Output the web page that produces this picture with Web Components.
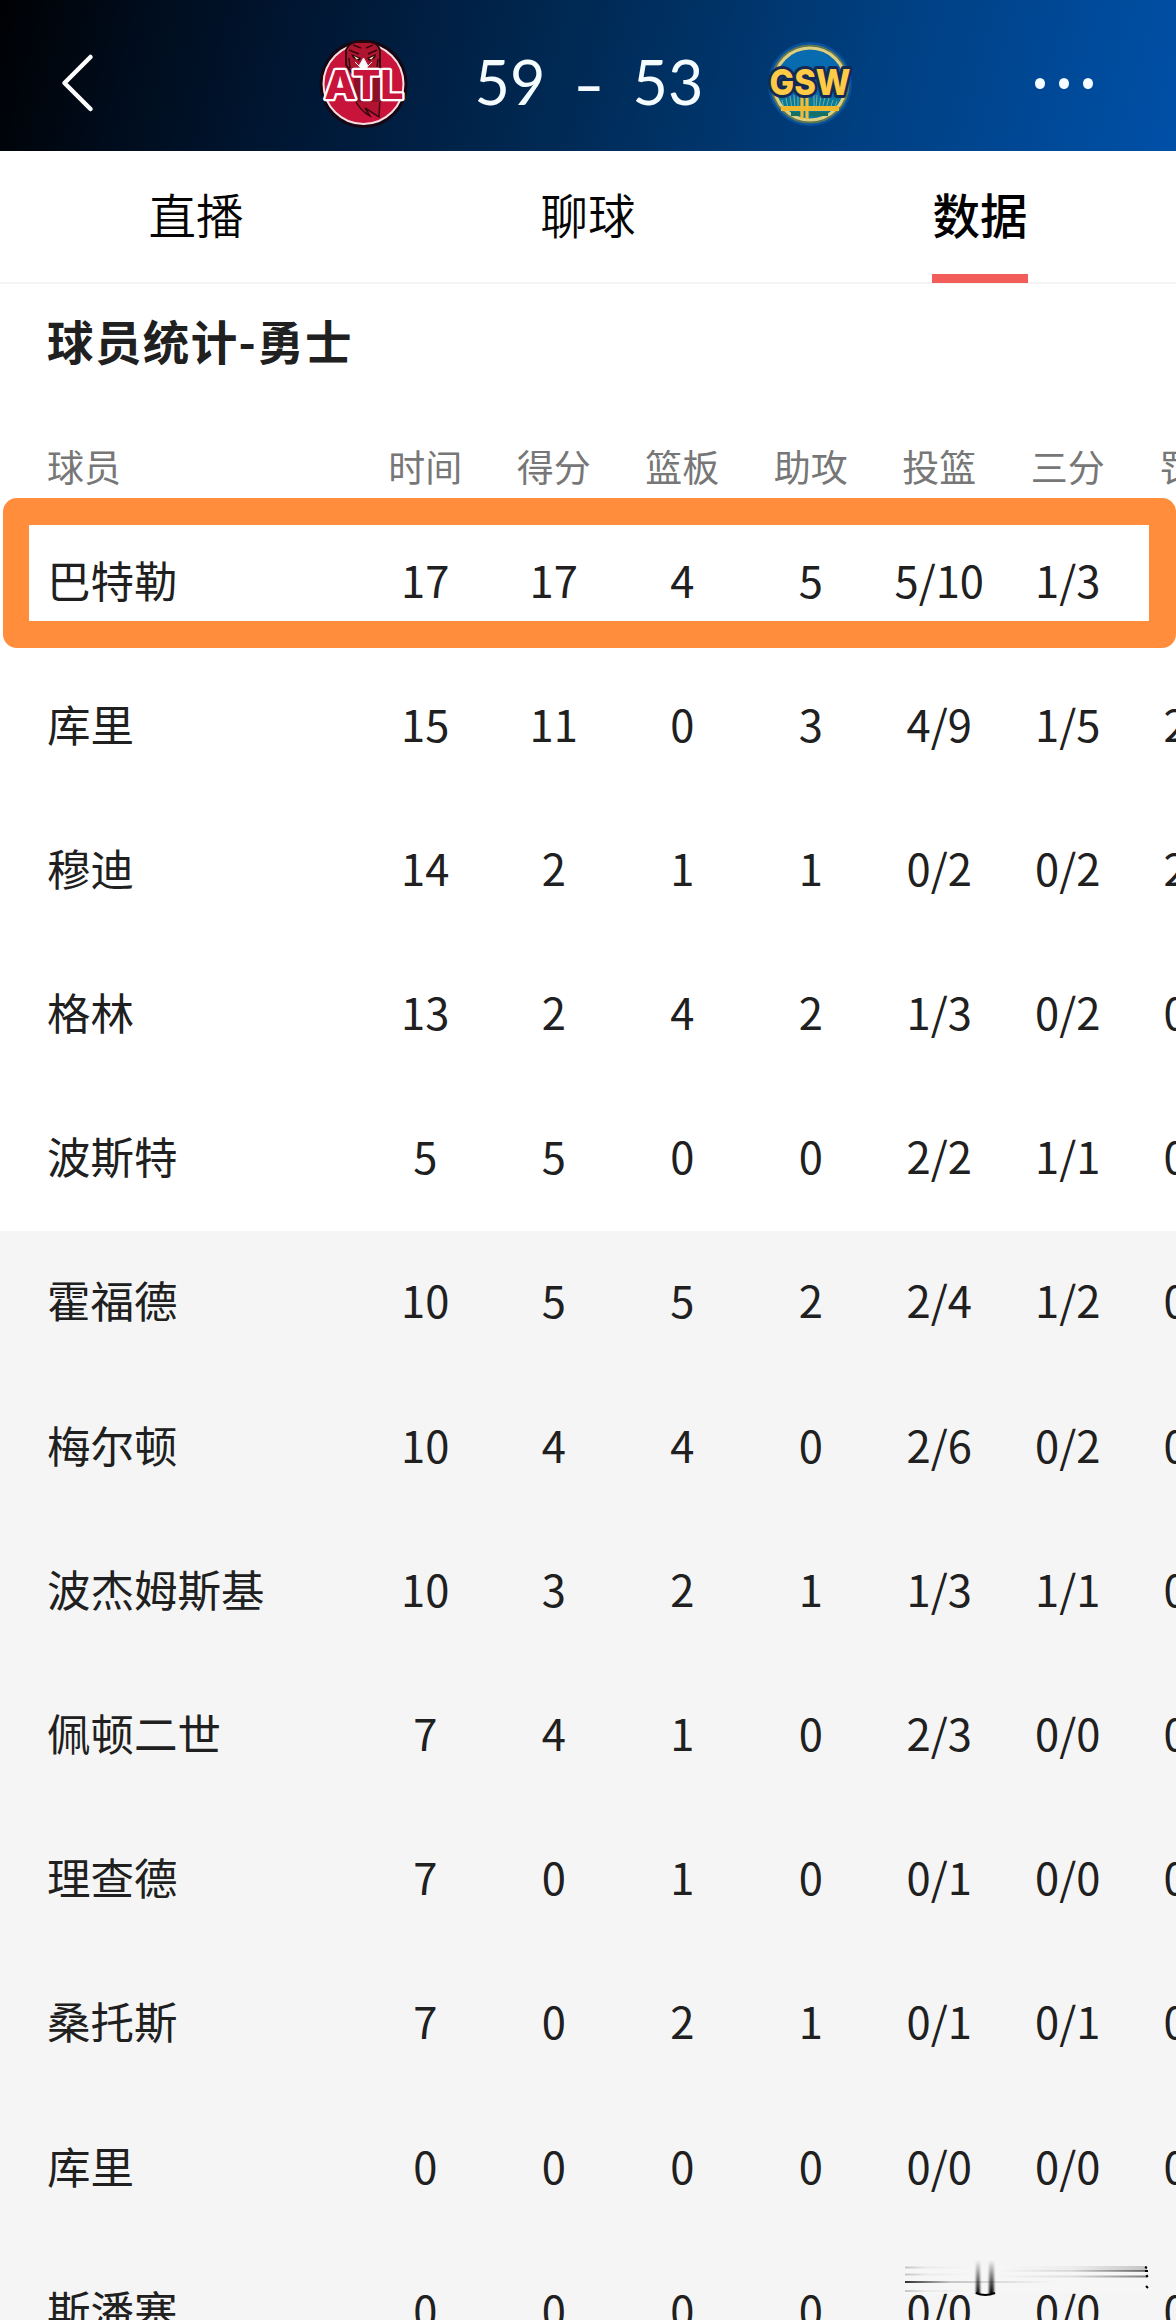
<!DOCTYPE html>
<html lang="zh-CN">
<head>
<meta charset="utf-8">
<meta name="viewport" content="width=device-width, initial-scale=1">
<title>球员统计</title>
<style>
  html, body {
    margin: 0;
    height: 2320px;
    overflow: hidden;
    background: #fff;
  }

  body {
    font-family: "Noto Sans CJK SC", sans-serif;
    color: #202020;
  }
</style>
</head>
<body>
<match-page>
  <match-header slot="header" home="59" away="53">
    <team-logo slot="home" team="ATL"></team-logo>
    <team-logo slot="away" team="GSW"></team-logo>
  </match-header>
  <tab-bar slot="tabs">
    <tab-item>直播</tab-item>
    <tab-item>聊球</tab-item>
    <tab-item selected>数据</tab-item>
  </tab-bar>
  <player-stats>球员统计-勇士</player-stats>
</match-page>

<script>
const COLUMNS = ['球员', '时间', '得分', '篮板', '助攻', '投篮', '三分', '罚球'];

const PLAYERS = [
    ['巴特勒', '17', '17', '4', '5', '5/10', '1/3', '6/6'],
    ['库里', '15', '11', '0', '3', '4/9', '1/5', '2/2'],
    ['穆迪', '14', '2', '1', '1', '0/2', '0/2', '2/2'],
    ['格林', '13', '2', '4', '2', '1/3', '0/2', '0/0'],
    ['波斯特', '5', '5', '0', '0', '2/2', '1/1', '0/0'],
    ['霍福德', '10', '5', '5', '2', '2/4', '1/2', '0/0'],
    ['梅尔顿', '10', '4', '4', '0', '2/6', '0/2', '0/0'],
    ['波杰姆斯基', '10', '3', '2', '1', '1/3', '1/1', '0/0'],
    ['佩顿二世', '7', '4', '1', '0', '2/3', '0/0', '0/0'],
    ['理查德', '7', '0', '1', '0', '0/1', '0/0', '0/0'],
    ['桑托斯', '7', '0', '2', '1', '0/1', '0/1', '0/0'],
    ['库里', '0', '0', '0', '0', '0/0', '0/0', '0/0'],
    ['斯潘塞', '0', '0', '0', '0', '0/0', '0/0', '0/0'],
];

const STARTERS = 5;

class BaseElement extends HTMLElement {
    constructor() {
        super();
        this.attachShadow({ mode: 'open' });
    }

    connectedCallback() {
        const template = document.createElement('template');
        template.innerHTML = `<style>${this.styles}</style>${this.markup}`;
        this.shadowRoot.replaceChildren(template.content.cloneNode(true));
    }
}

class MatchPage extends BaseElement {
    get markup() {
        return `
            <slot name="header"></slot>
            <slot name="tabs"></slot>
            <slot></slot>
            <smudge-mark></smudge-mark>
        `;
    }

    get styles() {
        return `
  :host {
    display: flex;
    flex-direction: column;
    position: relative;
    width: 1176px;
    height: 2320px;
    overflow: hidden;
  }

  smudge-mark {
    position: absolute;
    left: 900px;
    top: 2256px;
  }
        `;
    }
}

class MatchHeader extends BaseElement {
    get markup() {
        return `
            <svg class="back" width="36" height="64" viewBox="0 0 36 64">
              <path d="M30.500 6 L4.500 32 L30.500 58" fill="none" stroke="#fff" stroke-width="4.500" stroke-linecap="round" stroke-linejoin="round"/>
            </svg>
            <div class="score">
              <slot name="home"></slot>
              <span class="points home">${this.getAttribute('home')}</span>
              <span class="dash">-</span>
              <span class="points">${this.getAttribute('away')}</span>
              <slot name="away"></slot>
            </div>
            <div class="more"><i></i><i></i><i></i></div>
        `;
    }

    get styles() {
        return `
  :host {
    display: grid;
    flex: none;
    grid-template-columns: 318px 538px 1fr;
    align-items: center;
    height: 151px;
    padding-top: 16px;
    box-sizing: border-box;
    background: linear-gradient(105deg, #000103 0%, #000c1c 12%, #001938 29%, #002a55 49%, #003f80 73%, #0050a8 100%);
    color: #f5fcff;
  }

  .back {
    margin-left: 60px;
    margin-bottom: 2px;
  }

  .score {
    display: grid;
    grid-template-columns: 92px 152px 54px 148px 92px;
    align-items: center;
    font: 400 61px/70px Lato, sans-serif;
  }

  .points {
    width: 104px;
    padding-bottom: 3px;
    text-align: center;
  }

  .points.home {
    justify-self: end;
  }

  .dash {
    text-align: center;
    transform: scaleX(1.4);
  }

  .more {
    display: flex;
    gap: 14px;
    margin-left: 179px;
  }

  .more i {
    width: 10px;
    height: 11px;
    border-radius: 50%;
    background: #f5fcff;
  }
        `;
    }
}

class TeamLogo extends BaseElement {
    get markup() {
        return this.getAttribute('team') === 'ATL' ? this.hawks : this.warriors;
    }

    get hawks() {
        return `
            <svg width="92" height="92" viewBox="0 0 92 92">
              <circle cx="45.500" cy="46" r="44" fill="#170611"/>
              <circle cx="45.500" cy="46" r="40" fill="#c8143a" stroke="#f4dfe3" stroke-width="2"/>
              <path d="M28 12 Q31 5 38 4 L52 4 Q60 5 62 12 L62 29 L56 35 L34 35 L28 27 Z" fill="#b01530" stroke="#25070e" stroke-width="1.800"/>
              <path d="M31 12 L41 16 M35 7 L43 10 M59 12 L50 16 M55 7 L48 10 M32 30 L31 20 M59 29 L60 21" fill="none" stroke="#38070f" stroke-width="1.500"/>
              <path d="M33 16 L43 20 L41 23 L35 20 Z M58 16 L49 20 L51 23 L57 20 Z" fill="#2c0710"/>
              <path d="M36 18 L41 20.500 L38.500 21.500 Z M56 18 L51 20.500 L53.500 21.500 Z" fill="#ffe8b0"/>
              <path d="M45.500 20 L50 28 L46 34 L41 28 Z M37 24 L41 28 M54 24 L50 28" fill="#fff" stroke="#eee" stroke-width="1"/>
              <path d="M36 60 Q42 73 52 78 L47 70 L61 79 L62 60" fill="#b31330" stroke="#3b0810" stroke-width="1.500"/>
              <path d="M36 36 H62 V64 H36 Z" fill="#8a1027"/>
              <text x="46" y="61" text-anchor="middle" textLength="79" lengthAdjust="spacingAndGlyphs">ATL</text>
            </svg>
        `;
    }

    get warriors() {
        return `
            <svg width="92" height="92" viewBox="0 0 92 92">
              <circle cx="46" cy="46" r="42" fill="#0751a0"/>
              <circle cx="46" cy="46" r="37" fill="#086aaf" stroke="#5e7550" stroke-width="5"/>
              <circle cx="46" cy="46" r="36" fill="none" stroke="#dacf82" stroke-width="3.200"/>
              <path d="M15 60 H77 Q71 76 46 80 Q21 76 15 60 Z" fill="#087b9b"/>
              <path d="M18 62 L20 71 M22 60 L24 71 M26 58 L28 71 M30 57 L31 71 M34 56 L34 71 M50 55 L50 71 M53 57 L52 71 M57 58 L55 71 M61 59 L58 71 M65 60 L62 71 M69 62 L66 71 M73 63 L70 71" stroke="#7aac9a" stroke-width="1"/>
              <path d="M17 70.500 H75" stroke="#f0b82e" stroke-width="5"/>
              <path d="M38 56 V81 M43 56 V81" stroke="#f0bd38" stroke-width="3.200"/>
              <path d="M27 76 H36 M46 76 H64" stroke="#147064" stroke-width="4"/>
              <text x="46" y="57" text-anchor="middle" textLength="81" lengthAdjust="spacingAndGlyphs">GSW</text>
            </svg>
        `;
    }

    get styles() {
        return `
  :host {
    display: block;
    width: 92px;
    height: 92px;
  }

  svg {
    display: block;
  }

  text {
    font: 800 39px Inter, "Liberation Sans", sans-serif;
    fill: #c8143a;
    stroke: #fff;
    stroke-width: 4.500px;
    stroke-linejoin: round;
    paint-order: stroke;
  }

  :host([team="GSW"]) text {
    font-size: 36px;
    fill: #ffca45;
    stroke: #142a56;
    stroke-width: 6px;
  }
        `;
    }
}

class TabBar extends BaseElement {
    get markup() {
        return `<slot></slot>`;
    }

    get styles() {
        return `
  :host {
    display: grid;
    flex: none;
    grid-template-columns: repeat(3, 1fr);
    height: 131px;
    border-bottom: 2px solid #f4f4f4;
  }
        `;
    }
}

class TabItem extends BaseElement {
    get markup() {
        return `<span><slot></slot></span>`;
    }

    get styles() {
        return `
  :host {
    display: flex;
    justify-content: center;
    color: #050505;
    font-size: 47.500px;
    font-weight: 350;
  }

  span {
    box-sizing: border-box;
    width: 96px;
    height: 132px;
    line-height: 125px;
    text-align: center;
    white-space: nowrap;
  }

  :host([selected]) {
    color: #000;
    font-weight: 500;
  }

  :host([selected]) span {
    border-bottom: 9px solid #f25d59;
  }
        `;
    }
}

class PlayerStats extends BaseElement {
    get markup() {
        return `
            <h2><slot></slot></h2>
            <stat-row heading values="${COLUMNS.join()}"></stat-row>
            ${PLAYERS.map((player, i) => `
              <stat-row values="${player.join()}" ${i < STARTERS ? '' : 'bench'} ${i === 0 ? 'marked' : ''}></stat-row>
            `).join('')}
        `;
    }

    get styles() {
        return `
  :host {
    display: flex;
    flex: none;
    flex-direction: column;
  }

  h2 {
    margin: 0;
    padding-left: 47px;
    height: 137px;
    font-size: 46.500px;
    font-weight: 700;
    line-height: 111px;
    letter-spacing: 1.400px;
  }
        `;
    }
}

class StatRow extends BaseElement {
    get markup() {
        return this.getAttribute('values').split(',').map((value) => `<span>${value}</span>`).join('');
    }

    get styles() {
        return `
  :host {
    display: grid;
    flex: none;
    grid-template-columns: 314px repeat(7, 128.500px);
    position: relative;
    width: 1176px;
    height: 144.200px;
    padding-left: 47px;
    box-sizing: border-box;
    font-size: 43.500px;
    line-height: 138px;
    overflow: hidden;
  }

  span {
    text-align: center;
    white-space: nowrap;
  }

  span:first-of-type {
    text-align: left;
  }

  :host([heading]) {
    height: 89.500px;
    font-size: 37px;
    line-height: 90px;
    color: #777;
  }

  :host([bench]) {
    background: #f5f5f5;
  }

  :host([marked]) {
    overflow: visible;
  }

  /* thick frame that overlaps the rows around it */
  :host([marked])::after {
    content: "";
    position: absolute;
    left: 3px;
    top: -13px;
    width: 1173px;
    height: 150px;
    box-sizing: border-box;
    border: solid #ff8d3b;
    border-width: 27px 27px 27px 26px;
    border-radius: 14px;
  }
        `;
    }
}

class SmudgeMark extends BaseElement {
    get markup() {
        return `
            <svg width="252" height="46" viewBox="0 0 252 46">
              <defs>
                <linearGradient id="right"><stop offset="0" stop-color="#000" stop-opacity="0"/><stop offset=".5" stop-color="#000" stop-opacity=".1"/><stop offset="1" stop-color="#000" stop-opacity=".5"/></linearGradient>
                <linearGradient id="left"><stop offset="0" stop-color="#000" stop-opacity=".8"/><stop offset=".3" stop-color="#000" stop-opacity=".2"/><stop offset="1" stop-color="#000" stop-opacity="0"/></linearGradient>
                <linearGradient id="down" x2="0" y2="1"><stop offset="0" stop-color="#000" stop-opacity="0"/><stop offset="1" stop-color="#000"/></linearGradient>
                <filter id="soft" x="-50%" width="200%"><feGaussianBlur stdDeviation="1 .3"/></filter>
              </defs>
              <rect x="5" y="10" width="243" height="28" fill="#fff" opacity=".18"/>
              <g fill="url(#right)">
                <rect x="98" y="10" width="149" height="5" opacity=".4"/>
                <rect x="98" y="14" width="150" height="2"/>
                <rect x="98" y="19.500" width="150" height="2"/>
              </g>
              <g fill="url(#left)">
                <rect x="5" y="10.500" width="70" height="2" opacity=".25"/>
                <rect x="5" y="17.500" width="70" height="2" opacity=".25"/>
                <rect x="5" y="25" width="150" height="2"/>
                <rect x="5" y="34" width="70" height="2" opacity=".25"/>
              </g>
              <g fill="url(#down)" filter="url(#soft)">
                <rect x="76" y="4" width="4" height="34"/>
                <rect x="89" y="4" width="5" height="34"/>
              </g>
              <path d="M76 37 Q85 41 95 37" fill="none" stroke="#000" stroke-width="2"/>
              <path d="M245 11 l2 1 M245 15 h3 M246 20.500 l2 -1 M246 30 l2 2" stroke="#000" stroke-width="2"/>
            </svg>
        `;
    }

    get styles() {
        return `
  :host {
    display: block;
  }

  svg {
    display: block;
  }
        `;
    }
}

customElements.define('match-page', MatchPage);
customElements.define('match-header', MatchHeader);
customElements.define('team-logo', TeamLogo);
customElements.define('tab-bar', TabBar);
customElements.define('tab-item', TabItem);
customElements.define('player-stats', PlayerStats);
customElements.define('stat-row', StatRow);
customElements.define('smudge-mark', SmudgeMark);
</script>
</body>
</html>
